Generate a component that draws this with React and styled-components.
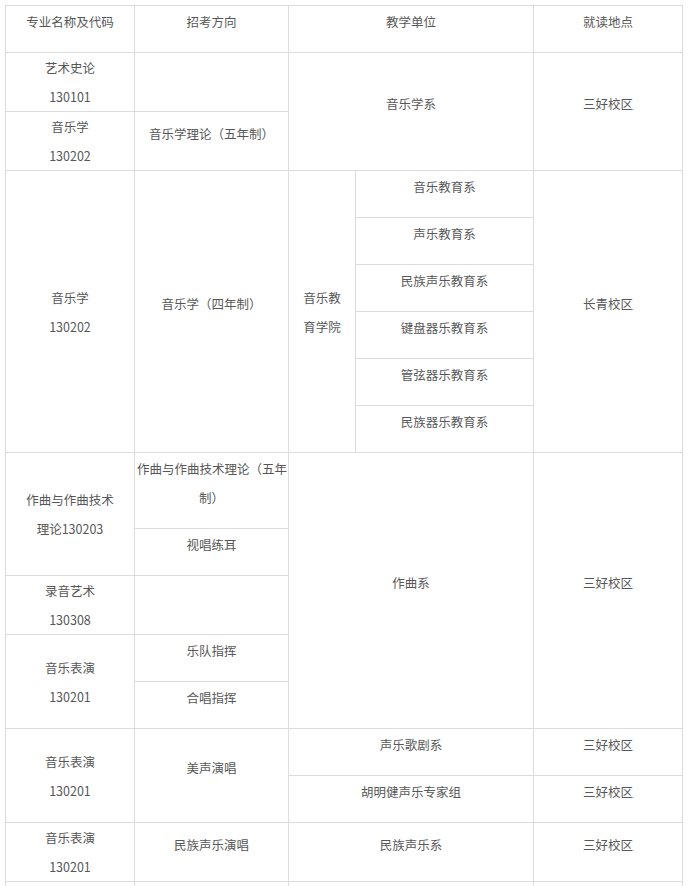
import React from "react";
import styled, { createGlobalStyle } from "styled-components";

const GlobalStyle = createGlobalStyle`
  html, body {
    margin: 0;
    padding: 0;
    background: #ffffff;
  }
`;

const Page = styled.div`
  padding: 5px 0 0 5px;
`;

const Table = styled.table`
  border-collapse: collapse;
  table-layout: fixed;
  width: 677px;
  font-family: "Noto Sans CJK SC", "Noto Sans", sans-serif;
  font-size: 12.5px;
  line-height: 29px;
  color: #575757;
`;

const Row = styled.tr`
  height: ${p => p.$h}px;
`;

const Cell = styled.td`
  border: 1px solid #dcdcdc;
  text-align: center;
  vertical-align: middle;
  padding: ${p => (p.$lift ? "0 2px 16px" : "0 2px")};
  white-space: nowrap;
`;

const Col = styled.col`
  width: ${p => p.$w}px;
`;

const widths = [129, 154, 67, 178, 149];

const eduDepts = [
  "声乐教育系",
  "民族声乐教育系",
  "键盘器乐教育系",
  "管弦器乐教育系",
  "民族器乐教育系",
];

const App = () => {
  return (
    <Page>
      <GlobalStyle />
      <Table>
        <colgroup>
          {widths.map((w, i) => (
            <Col key={i} $w={w} />
          ))}
        </colgroup>
        <tbody>
          <Row $h={47}>
            <Cell $lift>专业名称及代码</Cell>
            <Cell $lift>招考方向</Cell>
            <Cell $lift colSpan={2}>教学单位</Cell>
            <Cell $lift>就读地点</Cell>
          </Row>

          <Row $h={59}>
            <Cell>艺术史论<br />130101</Cell>
            <Cell />
            <Cell $lift colSpan={2} rowSpan={2}>音乐学系</Cell>
            <Cell $lift rowSpan={2}>三好校区</Cell>
          </Row>
          <Row $h={59}>
            <Cell>音乐学<br />130202</Cell>
            <Cell $lift>音乐学理论（五年制）</Cell>
          </Row>

          <Row $h={47}>
            <Cell rowSpan={6}>音乐学<br />130202</Cell>
            <Cell $lift rowSpan={6}>音乐学（四年制）</Cell>
            <Cell rowSpan={6}>音乐教<br />育学院</Cell>
            <Cell $lift>音乐教育系</Cell>
            <Cell $lift rowSpan={6}>长青校区</Cell>
          </Row>
          {eduDepts.map(d => (
            <Row $h={47} key={d}>
              <Cell $lift>{d}</Cell>
            </Row>
          ))}

          <Row $h={76}>
            <Cell rowSpan={2}>作曲与作曲技术<br />理论130203</Cell>
            <Cell $lift>作曲与作曲技术理论（五年<br />制）</Cell>
            <Cell $lift colSpan={2} rowSpan={5}>作曲系</Cell>
            <Cell $lift rowSpan={5}>三好校区</Cell>
          </Row>
          <Row $h={47}>
            <Cell $lift>视唱练耳</Cell>
          </Row>
          <Row $h={59}>
            <Cell>录音艺术<br />130308</Cell>
            <Cell />
          </Row>
          <Row $h={47}>
            <Cell rowSpan={2}>音乐表演<br />130201</Cell>
            <Cell $lift>乐队指挥</Cell>
          </Row>
          <Row $h={47}>
            <Cell $lift>合唱指挥</Cell>
          </Row>

          <Row $h={47}>
            <Cell rowSpan={2}>音乐表演<br />130201</Cell>
            <Cell $lift rowSpan={2}>美声演唱</Cell>
            <Cell $lift colSpan={2}>声乐歌剧系</Cell>
            <Cell $lift>三好校区</Cell>
          </Row>
          <Row $h={47}>
            <Cell $lift colSpan={2}>胡明健声乐专家组</Cell>
            <Cell $lift>三好校区</Cell>
          </Row>

          <Row $h={59}>
            <Cell>音乐表演<br />130201</Cell>
            <Cell $lift>民族声乐演唱</Cell>
            <Cell $lift colSpan={2}>民族声乐系</Cell>
            <Cell $lift>三好校区</Cell>
          </Row>
          <Row $h={59}>
            <Cell />
            <Cell />
            <Cell colSpan={2} />
            <Cell />
          </Row>
        </tbody>
      </Table>
    </Page>
  );
};

export default App;
